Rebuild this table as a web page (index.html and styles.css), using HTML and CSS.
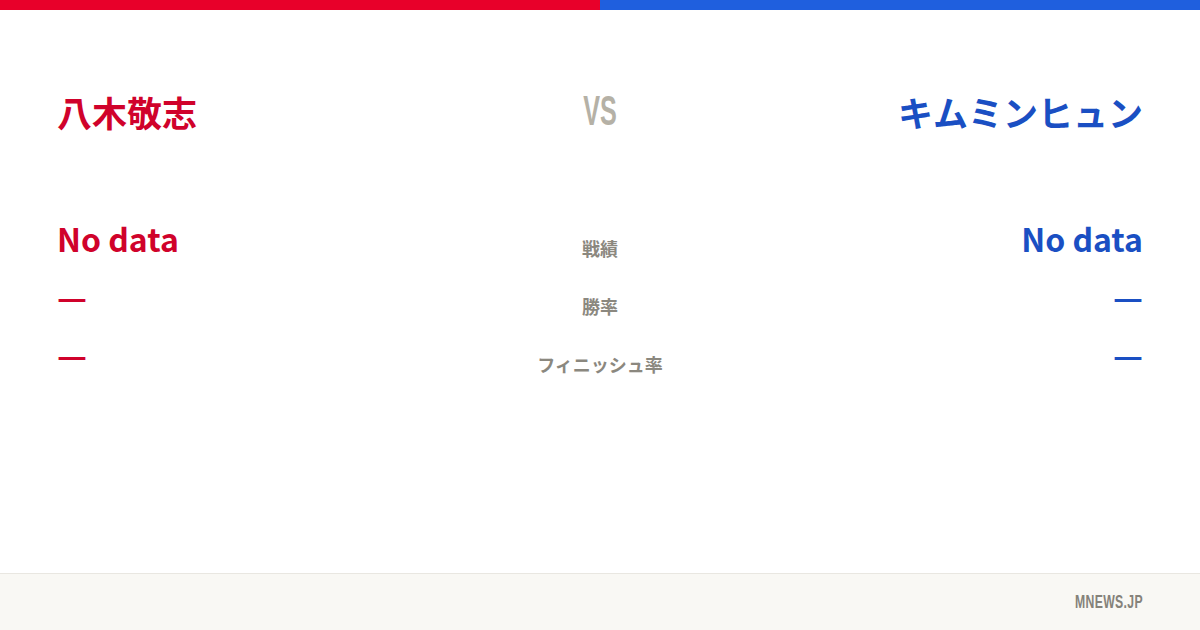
FILE: index.html
```html
<!DOCTYPE html>
<html lang="ja">
<head>
<meta charset="utf-8">
<link rel="stylesheet" href="styles.css">
</head>
<body>
<div class="page">
  <div class="topbar"><div class="bar-red"></div><div class="bar-blue"></div></div>
  <main class="main">
    <div class="row head">
      <div class="name red">八木敬志</div>
      <div class="vs"><span>VS</span></div>
      <div class="name blue right">キムミンヒュン</div>
    </div>
    <div class="stats">
      <div class="row stat first">
        <div class="val big red">No data</div>
        <div class="label">戦績</div>
        <div class="val big blue right">No data</div>
      </div>
      <div class="row stat">
        <div class="val dash red">—</div>
        <div class="label">勝率</div>
        <div class="val dash blue right">—</div>
      </div>
      <div class="row stat">
        <div class="val dash red">—</div>
        <div class="label">フィニッシュ率</div>
        <div class="val dash blue right">—</div>
      </div>
    </div>
  </main>
  <footer class="footer"><span class="brand">MNEWS.JP</span></footer>
</div>
</body>
</html>
```
FILE: styles.css
```css
* { box-sizing: border-box; margin: 0; padding: 0; }
html, body { width: 1200px; height: 630px; background: #ffffff; overflow: hidden; }
body { font-family: "Noto Sans CJK JP", "Noto Sans", sans-serif; }
.page { width: 1200px; height: 630px; display: flex; flex-direction: column; }
.topbar { height: 10px; display: flex; flex: none; }
.bar-red { flex: 1; background: #e8002a; }
.bar-blue { flex: 1; background: #1f5fde; }
.main { flex: 1; padding: 78px 57px 0 57px; }
.row { display: grid; grid-template-columns: 1fr 200px 1fr; align-items: center; }
.right { text-align: right; }
.red { color: #d0022b; }
.blue { color: #1a4fc3; }
.name { font-size: 35px; font-weight: 700; line-height: 48px; }
.vs { text-align: center; align-self: start; }
.vs span { display: inline-block; font-family: "Liberation Sans", sans-serif; font-weight: 700; font-size: 42px; line-height: 46px; color: #b5b1a6; transform: scaleX(0.6); }
.stats { margin-top: 73px; display: flex; flex-direction: column; }
.stat { height: 58px; }
.val { font-weight: 700; }
.big { font-size: 32px; line-height: 40px; }
.dash { font-size: 33px; line-height: 40px; }
.label { text-align: center; font-size: 18px; font-weight: 700; color: #8b887f; padding-top: 20px; }
.footer { height: 57px; flex: none; background: #f9f8f4; border-top: 1px solid #e9e7e1; display: flex; align-items: center; justify-content: flex-end; padding-right: 57px; }
.brand { display: inline-block; font-family: "Liberation Sans", sans-serif; font-weight: 700; font-size: 18px; color: #85827a; transform: scaleX(0.68); transform-origin: right center; letter-spacing: 0.5px; }
```
